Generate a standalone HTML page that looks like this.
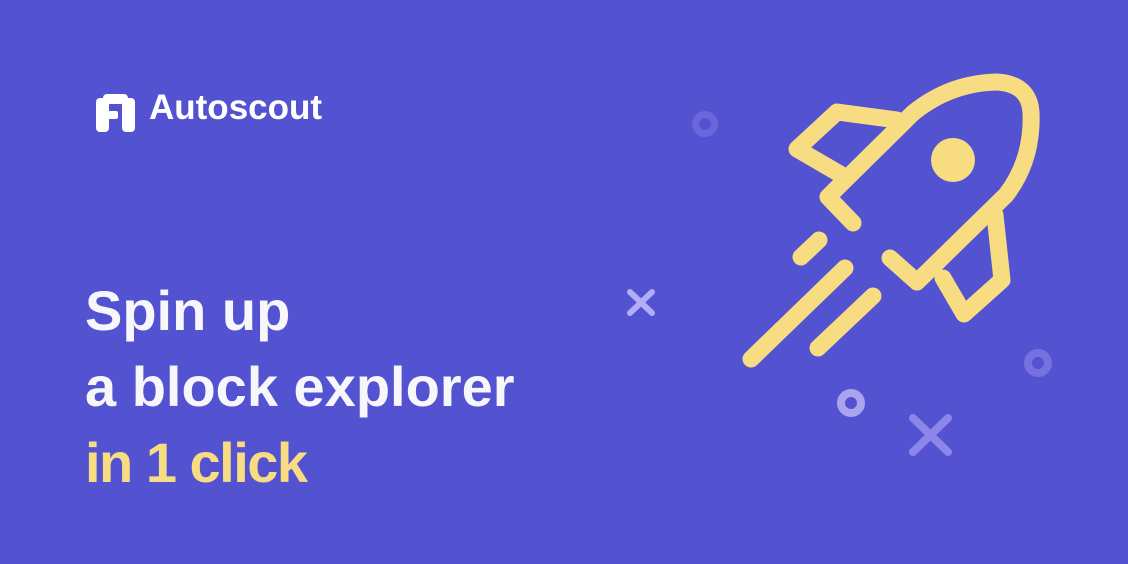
<!DOCTYPE html>
<html><head><meta charset="utf-8"><style>
html,body{margin:0;padding:0}
body{width:1128px;height:564px;background:#5353d1;position:relative;overflow:hidden;font-family:"Liberation Sans",sans-serif}
.t{position:absolute;left:85px;font-weight:bold;font-size:56px;color:#f7f7fb;white-space:nowrap;line-height:1}
.logo{position:absolute;left:149px;top:90px;font-size:35px;font-weight:bold;color:#fff;line-height:1}
</style></head><body>
<svg width="1128" height="564" style="position:absolute;left:0;top:0">
  <g fill="#fff">
    <rect x="103" y="94" width="25" height="10" rx="4"/>
    <rect x="96" y="98" width="13" height="34" rx="4"/>
    <rect x="122" y="98" width="13" height="34" rx="4"/>
    <rect x="105" y="111" width="13" height="8" rx="2"/>
  </g>
  <g fill="none" stroke-linecap="round" stroke-linejoin="round">
    <circle cx="705" cy="124" r="9.5" stroke="#6b66db" stroke-width="7"/>
    <circle cx="1038" cy="363" r="10" stroke="#7671df" stroke-width="8"/>
    <circle cx="851" cy="403" r="10" stroke="#a9a3f0" stroke-width="8"/>
    <path d="M630 292 L652 313 M652 292 L630 313" stroke="#b3adf5" stroke-width="6"/>
    <path d="M913 418 L948 452 M948 418 L913 452" stroke="#8c85ea" stroke-width="8"/>
    <g stroke="#f8dc82" stroke-width="17">
      <path d="M853 223 L828 197 L840 185 L913 113 Q950 83 997 82 Q1029 84 1031 112 Q1033 160 1006 195 L917 282 L890 258"/>
      <path d="M897 120 L837 112 L797 149 L840 174"/>
      <path d="M995 215 L1002 280 L964 314 L943 278"/>
      <path d="M819 240 L801 257"/>
      <path d="M845 268 L751 359"/>
      <path d="M873 296 L818 348"/>
    </g>
    <circle cx="953" cy="160" r="22" fill="#f8dc82"/>
  </g>
</svg>
<div class="logo">Autoscout</div>
<div class="t" style="top:283px">Spin up</div>
<div class="t" style="top:359px">a block explorer</div>
<div class="t" style="top:435px;color:#f8dc82;letter-spacing:-1.5px">in 1 click</div>
</body></html>
